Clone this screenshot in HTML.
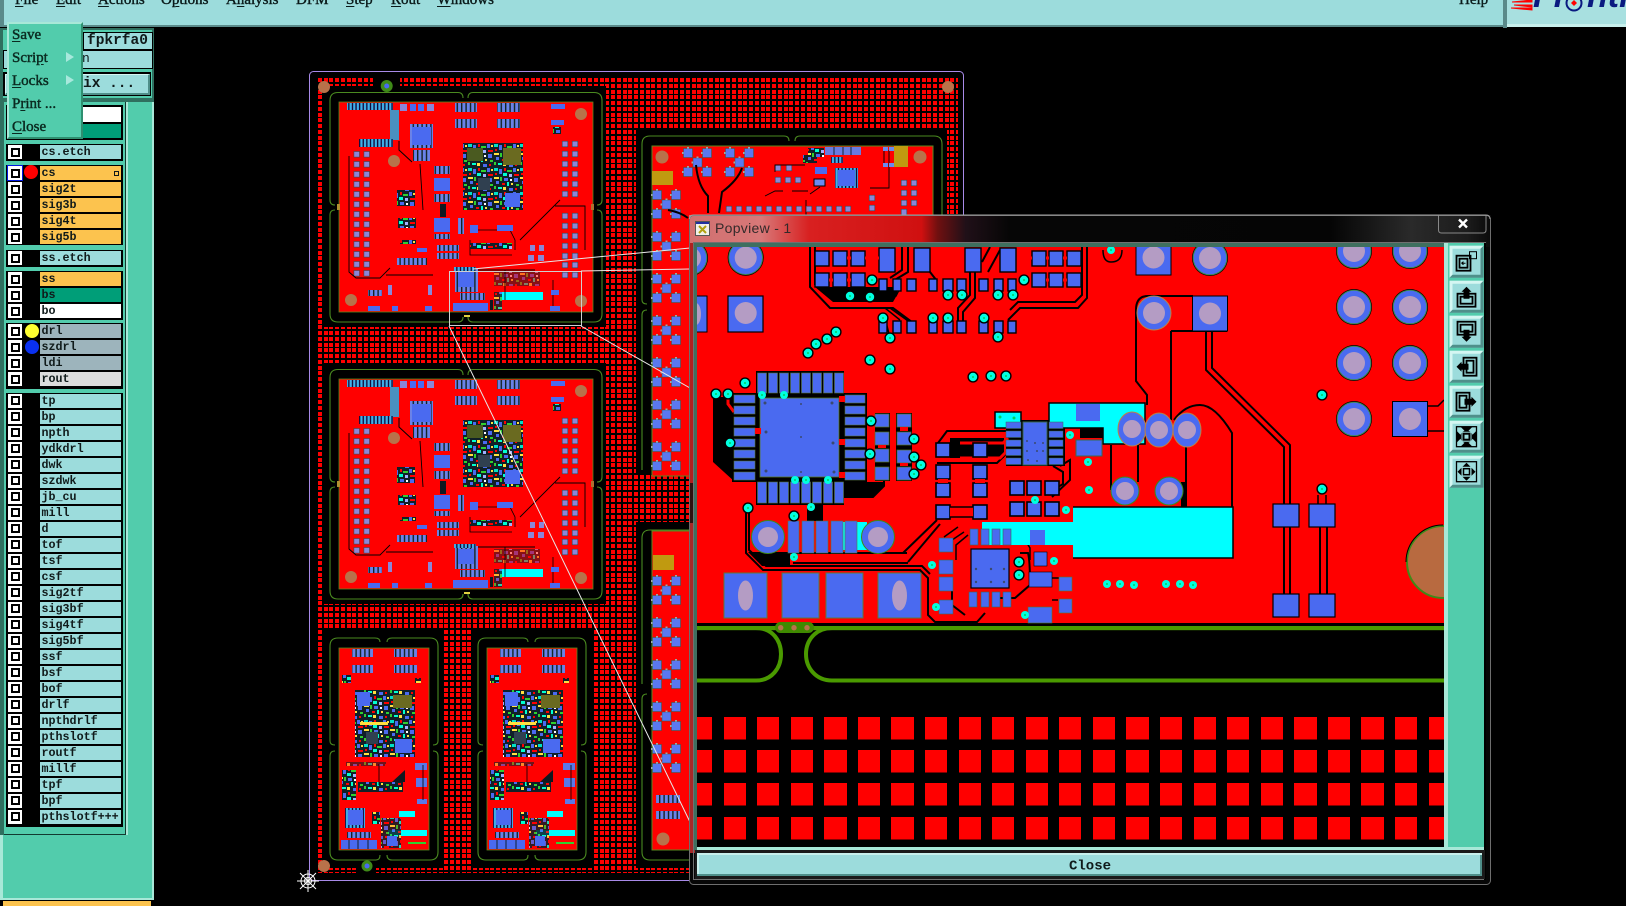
<!DOCTYPE html>
<html><head><meta charset="utf-8"><title>Popview</title>
<style>
html,body{margin:0;padding:0;background:#000;width:1626px;height:906px;overflow:hidden}
#w{position:relative;width:1626px;height:906px;overflow:hidden;background:#000;font-family:"Liberation Mono",monospace}
.a{position:absolute}
.m{position:absolute;top:-7.5px;font:15px/15px "Liberation Serif",serif;color:#0a1a1a;-webkit-text-stroke:.4px #0a1a1a;text-underline-offset:2px}
.g{position:absolute;left:6px;width:117px;background:#000}
.r{position:relative;height:16px}
.r i{position:absolute;left:2px;top:1px;width:14px;height:14px;background:#fff}
.r i::after{content:"";position:absolute;left:2.5px;top:2.5px;width:9px;height:9px;box-sizing:border-box;border:2.2px solid #000;background:#fff}
.r b{position:absolute;left:34px;top:1px;width:81px;height:14.3px;background:#9cdcdc;font:bold 11.7px/14px "Liberation Mono",monospace;color:#101a1a;padding-left:1.5px;box-sizing:border-box;white-space:nowrap}
.o b{background:#fcc34e}.gr b{background:#9db4bc}
.c{position:absolute;left:19px;top:1px;width:14px;height:14px;border-radius:50%}
.h{position:absolute;background:#9cdcdc;border:1px solid #000;font:bold 14.5px/17px "Liberation Mono",monospace;color:#101a1a;white-space:pre}
.dm{position:absolute;left:12px;font:15px/18px "Liberation Serif",serif;color:#0a2a20;-webkit-text-stroke:.45px #0a2a20;text-underline-offset:2px;white-space:pre}
.tri{position:absolute;left:66px;width:0;height:0;border-left:8px solid #a8e8dc;border-top:5px solid transparent;border-bottom:5px solid transparent}
svg{position:absolute;left:0;top:0}
</style></head><body><div id="w">

<svg width="1626" height="906" viewBox="0 0 1626 906" xmlns="http://www.w3.org/2000/svg">
<defs>
<pattern id="dots" patternUnits="userSpaceOnUse" x="335" y="78" width="23" height="23">
<g fill="#f00" shape-rendering="crispEdges">
<rect x="0" y="0" width="4" height="4"/><rect x="6" y="0" width="4" height="4"/><rect x="12" y="0" width="4" height="4"/><rect x="17" y="0" width="4" height="4"/>
<rect x="0" y="6" width="4" height="4"/><rect x="6" y="6" width="4" height="4"/><rect x="12" y="6" width="4" height="4"/><rect x="17" y="6" width="4" height="4"/>
<rect x="0" y="12" width="4" height="4"/><rect x="6" y="12" width="4" height="4"/><rect x="12" y="12" width="4" height="4"/><rect x="17" y="12" width="4" height="4"/>
<rect x="0" y="17" width="4" height="4"/><rect x="6" y="17" width="4" height="4"/><rect x="12" y="17" width="4" height="4"/><rect x="17" y="17" width="4" height="4"/>
</g></pattern>
<g id="bigrow" fill="#f00" shape-rendering="crispEdges">
<rect x="697" width="15" height="22.500"/><rect x="724" width="22" height="22.500"/><rect x="757" width="22" height="22.500"/><rect x="791" width="22" height="22.500"/><rect x="824" width="23" height="22.500"/><rect x="858" width="22" height="22.500"/><rect x="891" width="23" height="22.500"/><rect x="925" width="22" height="22.500"/><rect x="959" width="22" height="22.500"/><rect x="992" width="22" height="22.500"/><rect x="1026" width="22" height="22.500"/><rect x="1059" width="22" height="22.500"/><rect x="1093" width="22" height="22.500"/><rect x="1126" width="23" height="22.500"/><rect x="1160" width="22" height="22.500"/><rect x="1194" width="22" height="22.500"/><rect x="1227" width="22" height="22.500"/><rect x="1261" width="22" height="22.500"/><rect x="1294" width="23" height="22.500"/><rect x="1328" width="22" height="22.500"/><rect x="1361" width="23" height="22.500"/><rect x="1395" width="22" height="22.500"/><rect x="1429" width="15" height="22.500"/>
</g>
<pattern id="st" patternUnits="userSpaceOnUse" width="4.4" height="4"><rect width="4.4" height="4" fill="#122"/><rect x=".4" width="3" height="4" fill="#6a82e8"/></pattern>
<pattern id="st2" patternUnits="userSpaceOnUse" width="3.6" height="4"><rect width="3.6" height="4" fill="#103"/><rect x=".3" width="2.3" height="4" fill="#40b0e8"/></pattern>
<pattern id="n" patternUnits="userSpaceOnUse" width="26" height="24">
<rect width="26" height="24" fill="#102028"/>
<rect x="0" y="0" width="4" height="3" fill="#00e0c8"/><rect x="5" y="1" width="3" height="5" fill="#4a6af0"/><rect x="10" y="0" width="2" height="3" fill="#f00"/><rect x="13" y="2" width="5" height="2" fill="#30d030"/><rect x="19" y="0" width="3" height="4" fill="#4a6af0"/><rect x="23" y="1" width="2" height="2" fill="#ffe040"/>
<rect x="1" y="5" width="2" height="2" fill="#f00"/><rect x="9" y="5" width="4" height="3" fill="#00ffd0"/><rect x="15" y="6" width="3" height="3" fill="#a0b0ff"/><rect x="20" y="6" width="5" height="2" fill="#f00"/>
<rect x="0" y="9" width="5" height="2" fill="#ffe040"/><rect x="6" y="9" width="2" height="4" fill="#30d030"/><rect x="10" y="10" width="4" height="3" fill="#4a6af0"/><rect x="16" y="11" width="2" height="2" fill="#fff"/><rect x="20" y="10" width="4" height="4" fill="#4a6af0"/>
<rect x="2" y="13" width="3" height="3" fill="#4a6af0"/><rect x="8" y="15" width="3" height="2" fill="#f00"/><rect x="13" y="14" width="2" height="4" fill="#00ffd0"/><rect x="17" y="15" width="2" height="2" fill="#ffe040"/><rect x="22" y="16" width="3" height="2" fill="#30d030"/>
<rect x="0" y="18" width="2" height="3" fill="#30d030"/><rect x="4" y="19" width="4" height="2" fill="#00ffd0"/><rect x="9" y="19" width="3" height="3" fill="#ffe040"/><rect x="15" y="20" width="4" height="3" fill="#4a6af0"/><rect x="21" y="20" width="2" height="2" fill="#f00"/>
</pattern>
<g id="sp"><rect x="-2.8" y="-2.8" width="5.6" height="5.6" fill="#8a86d8" stroke="#444" stroke-width=".6"/></g>
<g id="v"><circle r="5.6" fill="#000"/><circle r="4.200" fill="#00ffe0"/><circle r="1" fill="#00d060"/></g>
<g id="tv"><circle r="4" fill="#00ffe0"/><circle r="1" fill="#00d060"/></g>
<g id="th"><circle r="18" fill="#000"/><circle r="16.8" fill="#4a6af0" stroke="#3f8a50" stroke-width="1"/><circle r="11" fill="#b49cc4"/></g>
<g id="ts"><rect x="-17.5" y="-17.5" width="35" height="35" fill="#4a6af0" stroke="#000" stroke-width="1"/><circle r="11" fill="#b49cc4"/></g>
<g id="p14"><rect x="-7" y="-7" width="14" height="14" fill="#4a6af0" stroke="#000" stroke-width="1.6"/></g>
<g id="bl"><rect x="-4.5" y="-4.5" width="9" height="9" fill="#5a78f0" stroke="#2a6040" stroke-width=".5"/><rect x="-1" y="-6" width="2" height="1.6" fill="#9aa"/><rect x="-6" y="-1" width="1.6" height="2" fill="#9aa"/></g>
<g id="grp"><use href="#bl" x="0" y="0"/><use href="#bl" x="19" y="0"/><use href="#bl" x="9.5" y="9.5"/><use href="#bl" x="0" y="19"/><use href="#bl" x="19" y="19"/></g>

<g id="boardA">
<rect x="339" y="102" width="254" height="210" fill="#f00" stroke="#5a8a20" stroke-width=".8"/>
<path d="M463 98q0-5.500-5-5.500H338q-8 0-8 8V200q0 5 5 5M335 210q-5 0-5 5V314q0 8 8 8H458q5 0 5-5M468 98q0-5.500 5-5.500H594q8 0 8 8V200q0 5-5 5M597 210q5 0 5 5V314q0 8-8 8H473q-5 0-5-5" fill="none" stroke="#4a8a20" stroke-width="1.1"/>
<rect x="464" y="315" width="6" height="2" fill="#e0d040"/><rect x="337" y="204" width="3" height="6" fill="#b09030"/><rect x="591" y="204" width="3" height="6" fill="#b07030"/>
<circle cx="581" cy="114" r="6" fill="#b8724a"/><circle cx="394" cy="161" r="6" fill="#b8724a"/><circle cx="351" cy="300" r="6" fill="#b8724a"/><circle cx="581" cy="301" r="6" fill="#b8724a"/>
<rect x="347" y="103" width="46" height="7" fill="url(#st2)"/><rect x="390" y="110" width="9" height="30" fill="#4a90c0"/><rect x="359" y="139" width="34" height="8" fill="url(#st2)"/>
<rect x="400" y="104" width="7" height="7" fill="#8a86d8"/><rect x="410" y="104" width="6" height="7" fill="#4a6af0"/><rect x="418" y="104" width="6" height="7" fill="#4a6af0"/><rect x="427" y="104" width="7" height="7" fill="#8a86d8"/>
<rect x="410" y="124" width="23" height="24" fill="url(#st)"/><rect x="412" y="127" width="19" height="18" fill="#4a6af0"/><rect x="413" y="150" width="17" height="11" fill="url(#st)"/><path d="M399 141V150L412 162" fill="none" stroke="#000" stroke-width="1"/>
<rect x="455" y="103" width="22" height="9" fill="url(#st)"/><rect x="455" y="119" width="22" height="9" fill="url(#st)"/><rect x="497" y="103" width="23" height="9" fill="url(#st)"/><rect x="497" y="119" width="23" height="9" fill="url(#st)"/>
<rect x="551" y="104" width="14" height="5" fill="#4a6af0"/><rect x="551" y="120" width="13" height="5" fill="#4a6af0"/><rect x="553" y="127" width="8" height="7" fill="url(#n)"/>
<rect x="463" y="143" width="60" height="67" fill="url(#n)"/><rect x="503" y="148" width="18" height="17" fill="#6a6a20"/><rect x="467" y="148" width="16" height="13" fill="#4a5a20"/><rect x="505" y="193" width="15" height="14" fill="#4a6af0"/><rect x="478" y="178" width="12" height="12" fill="#304050"/>
<rect x="434" y="178" width="16" height="13" fill="#4a6af0"/><rect x="434" y="218" width="16" height="14" fill="#4a6af0"/><rect x="434" y="166" width="16" height="8" fill="url(#st)"/><rect x="434" y="194" width="16" height="8" fill="url(#st)"/><rect x="434" y="234" width="16" height="5" fill="url(#st)"/><rect x="440" y="204" width="6" height="13" fill="#101820"/><rect x="458" y="218" width="6" height="16" fill="url(#st)"/>
<rect x="397" y="190" width="18" height="16" fill="url(#n)"/><rect x="398" y="218" width="18" height="10" fill="url(#n)"/><rect x="400" y="240" width="16" height="4" fill="url(#n)"/><rect x="397" y="258" width="30" height="7" fill="url(#st)"/><rect x="417" y="248" width="10" height="4" fill="#4a6af0"/>
<use href="#sp" x="356.700" y="154.300"/><use href="#sp" x="366.700" y="154.300"/><use href="#sp" x="356.700" y="164.300"/><use href="#sp" x="366.700" y="164.300"/><use href="#sp" x="356.700" y="174.300"/><use href="#sp" x="366.700" y="174.300"/><use href="#sp" x="356.700" y="184.300"/><use href="#sp" x="366.700" y="184.300"/><use href="#sp" x="356.700" y="194.300"/><use href="#sp" x="366.700" y="194.300"/><use href="#sp" x="356.700" y="204.300"/><use href="#sp" x="366.700" y="204.300"/><use href="#sp" x="356.700" y="214.300"/><use href="#sp" x="366.700" y="214.300"/><use href="#sp" x="356.700" y="224.300"/><use href="#sp" x="366.700" y="224.300"/><use href="#sp" x="356.700" y="234.300"/><use href="#sp" x="366.700" y="234.300"/><use href="#sp" x="356.700" y="244.300"/><use href="#sp" x="366.700" y="244.300"/><use href="#sp" x="356.700" y="254.300"/><use href="#sp" x="366.700" y="254.300"/><use href="#sp" x="356.700" y="264.300"/><use href="#sp" x="366.700" y="264.300"/><use href="#sp" x="356.700" y="273.300"/><use href="#sp" x="366.700" y="273.300"/>
<use href="#sp" x="565" y="144"/><use href="#sp" x="575" y="144"/><use href="#sp" x="565" y="154"/><use href="#sp" x="575" y="154"/><use href="#sp" x="565" y="164"/><use href="#sp" x="575" y="164"/><use href="#sp" x="565" y="174"/><use href="#sp" x="575" y="174"/><use href="#sp" x="565" y="184"/><use href="#sp" x="575" y="184"/><use href="#sp" x="565" y="194"/><use href="#sp" x="575" y="194"/>
<use href="#sp" x="565" y="216"/><use href="#sp" x="575" y="216"/><use href="#sp" x="565" y="226"/><use href="#sp" x="575" y="226"/><use href="#sp" x="565" y="236"/><use href="#sp" x="575" y="236"/><use href="#sp" x="565" y="246"/><use href="#sp" x="575" y="246"/><use href="#sp" x="565" y="256"/><use href="#sp" x="575" y="256"/><use href="#sp" x="565" y="265"/><use href="#sp" x="575" y="265"/><use href="#sp" x="565" y="275"/><use href="#sp" x="575" y="275"/>
<path d="M349 156V272L356 278H380L390 268M420 164L423 210M560 200L520 240M555 206H585V250M386 275H433M470 270H535" fill="none" stroke="#000" stroke-width=".9"/>
<path d="M470 230H510L515 240V250M470 240V255H512" fill="none" stroke="#000" stroke-width=".8"/><rect x="470" y="243" width="42" height="6" fill="url(#n)"/><rect x="470" y="225" width="8" height="8" fill="#4a6af0"/><rect x="497" y="225" width="8" height="6" fill="#4a6af0"/><rect x="505" y="225" width="8" height="6" fill="#4a6af0"/>
<rect x="437" y="245" width="22" height="6" fill="url(#st)"/><rect x="437" y="253" width="22" height="6" fill="url(#st)"/>
<rect x="530" y="245" width="5" height="6" fill="#8a86d8"/><rect x="539" y="245" width="5" height="6" fill="#8a86d8"/><rect x="528" y="255" width="6" height="6" fill="#8a86d8"/><rect x="538" y="255" width="6" height="6" fill="#8a86d8"/>
<rect x="455" y="269" width="23" height="23" fill="url(#st)"/><rect x="458" y="272" width="16" height="15" fill="#4a6af0"/><rect x="454" y="267" width="22" height="4" fill="url(#st2)"/>
<rect x="494" y="272" width="46" height="14" fill="url(#n)" opacity=".5"/><rect x="500" y="292" width="43" height="8" fill="#00ffff"/><rect x="494" y="292" width="8" height="18" fill="url(#n)" opacity=".8"/><rect x="460" y="293" width="25" height="7" fill="url(#st)"/>
<rect x="453" y="303" width="35" height="8" fill="#4a6af0"/><rect x="490" y="300" width="3" height="10" fill="#101820"/><path d="M505 270V300M553 280V310" stroke="#000" stroke-width=".8"/><rect x="551" y="290" width="8" height="5" fill="#4a6af0"/><rect x="550" y="306" width="10" height="5" fill="#4a6af0"/>
<rect x="368" y="290" width="14" height="6" fill="url(#st)"/><rect x="388" y="285" width="4" height="10" fill="#8a86d8"/><rect x="428" y="285" width="4" height="10" fill="#8a86d8"/>
<rect x="368" y="306" width="12" height="5" fill="#4a6af0"/><rect x="392" y="306" width="6" height="5" fill="#4a6af0"/><rect x="425" y="306" width="7" height="5" fill="#4a6af0"/>
</g>

<g id="boardS">
<rect x="339" y="648" width="90" height="202" fill="#f00" stroke="#5a8a20" stroke-width=".8"/>
<path d="M380 642q0-4-5-4H338q-8 0-8 8V741q0 4 5 4M335 751q-5 0-5 5V852q0 8 8 8H376q4 0 4-5M387 642q0-4 5-4H430q8 0 8 8V741q0 4-5 4M433 751q5 0 5 5V852q0 8-8 8H392q-5 0-5-5" fill="none" stroke="#4a8a20" stroke-width="1.100"/>
<rect x="352" y="649" width="21" height="8" fill="url(#st)"/><rect x="394" y="649" width="23" height="8" fill="url(#st)"/><rect x="352" y="665" width="21" height="8" fill="url(#st)"/><rect x="394" y="665" width="23" height="8" fill="url(#st)"/>
<rect x="342" y="675" width="9" height="8" fill="url(#n)"/><rect x="415" y="678" width="6" height="5" fill="url(#n)"/>
<rect x="355" y="690" width="60" height="67" fill="url(#n)"/><rect x="393" y="695" width="19" height="13" fill="#6a6a20"/><rect x="395" y="739" width="17" height="14" fill="#4a6af0"/><rect x="357" y="692" width="13" height="14" fill="#4a6af0"/><rect x="366" y="732" width="12" height="12" fill="#304050"/><rect x="360" y="722" width="28" height="3" fill="#ffe040"/>
<rect x="342" y="770" width="14" height="30" fill="url(#n)"/><rect x="358" y="782" width="45" height="10" fill="url(#n)"/><path d="M392 782L405 770V782Z" fill="#101820"/><rect x="346" y="762" width="40" height="4" fill="url(#n)" opacity=".6"/><rect x="415" y="763" width="12" height="7" fill="#5a78e8"/><rect x="416" y="778" width="11" height="9" fill="#5a78e8"/><rect x="417" y="799" width="10" height="5" fill="#5a78e8"/><path d="M379 764V785M423 765V800" stroke="#000" stroke-width=".8"/>
<rect x="345" y="808" width="20" height="20" fill="url(#st2)"/><rect x="348" y="810" width="15" height="15" fill="#4a6af0"/><rect x="372" y="812" width="8" height="12" fill="url(#n)"/>
<rect x="341" y="840" width="36" height="9" fill="#4a6af0"/><path d="M349 840v9M358 840v9M368 840v9" stroke="#123"/><rect x="347" y="832" width="24" height="6" fill="url(#st)"/>
<rect x="388" y="830" width="39" height="6" fill="#00ffff"/><rect x="399" y="811" width="16" height="6" fill="#00ffff"/><rect x="381" y="818" width="20" height="30" fill="url(#n)" opacity=".85"/><rect x="387" y="836" width="10" height="10" fill="#4a6af0"/><rect x="408" y="842" width="18" height="2" fill="#30d030"/>
</g>
<linearGradient id="gl" x1="0" x2="1" y1="0" y2="0"><stop offset="0" stop-color="#d07070"/><stop offset=".09" stop-color="#d87878"/><stop offset=".15" stop-color="#d82020"/><stop offset=".29" stop-color="#d01010"/><stop offset=".31" stop-color="#701010"/><stop offset=".345" stop-color="#201018"/><stop offset=".4" stop-color="#060606"/><stop offset=".8" stop-color="#050505"/><stop offset=".9" stop-color="#2a2a2a"/><stop offset=".97" stop-color="#1c1c1c"/><stop offset="1" stop-color="#0a0a0a"/></linearGradient>
<clipPath id="cv"><rect x="697" y="247" width="747" height="600"/></clipPath>
</defs>

<!-- overview -->
<rect x="316" y="78" width="642" height="795" fill="url(#dots)"/>
<rect x="300" y="84" width="21" height="3" fill="#000"/>
<rect x="373" y="74" width="27" height="12" fill="#000"/>
<rect x="322" y="86" width="284" height="241" fill="#000"/>
<rect x="322" y="363" width="284" height="241" fill="#000"/>
<rect x="322" y="630" width="122" height="238" fill="#000"/>
<rect x="471" y="630" width="123" height="238" fill="#000"/>
<rect x="636" y="130" width="311" height="344" fill="#000"/>
<rect x="636" y="522" width="330" height="346" fill="#000"/>
<rect x="357" y="866" width="19" height="10" fill="#000"/>
<use href="#boardA"/><use href="#boardA" y="277"/>
<use href="#boardS"/><use href="#boardS" x="148"/>
<circle cx="324" cy="87" r="6" fill="#b8724a"/><circle cx="386.700" cy="86" r="6" fill="#3f8a18"/><circle cx="386.700" cy="86" r="2.500" fill="#4a6af0"/>
<circle cx="948" cy="87" r="6" fill="#b8724a"/><circle cx="324" cy="866" r="6" fill="#b8724a"/><circle cx="367" cy="866" r="5.500" fill="#3f8a18"/><circle cx="367" cy="866" r="2.500" fill="#4a6af0"/>

<!-- board B top -->
<rect x="652" y="146" width="281" height="330" fill="#f00" stroke="#5a8a20"/>
<path d="M789 141q0-5-5-5H650q-8 0-8 8V300q0 4 5 4M647 310q-5 0-5 5V470" fill="none" stroke="#4a8a20" stroke-width="1.100"/><path d="M795 141q0-5 5-5H934q8 0 8 8V215" fill="none" stroke="#4a8a20" stroke-width="1.100"/>
<circle cx="662" cy="157" r="6.500" fill="#b8724a"/><circle cx="920" cy="157" r="6.500" fill="#b8724a"/>
<rect x="652" y="171" width="21" height="14" fill="#c09a10"/><rect x="894" y="146" width="14" height="21" fill="#c09a10"/>
<use href="#grp" x="688" y="153"/><use href="#grp" x="730" y="153"/><use href="#grp" x="657" y="195"/><use href="#grp" x="657" y="237"/><use href="#grp" x="657" y="279"/><use href="#grp" x="657" y="321"/><use href="#grp" x="657" y="363"/><use href="#grp" x="657" y="405"/><use href="#grp" x="657" y="447"/>
<path d="M696 165Q698 186 708 196V213M742 168Q738 180 722 192L719 213M668 210Q680 212 688 218" fill="none" stroke="#000" stroke-width="2"/>
<rect x="835" y="168" width="23" height="20" fill="url(#st2)"/><rect x="838" y="170" width="17" height="16" fill="#4a6af0"/>
<rect x="825" y="147" width="36" height="8" fill="#6a7ae0"/><path d="M834 147v8M843 147v8M851 147v8" stroke="#123"/>
<rect x="803" y="155" width="14" height="8" fill="url(#n)"/><rect x="808" y="148" width="16" height="9" fill="url(#n)"/><rect x="831" y="157" width="12" height="6" fill="url(#st2)"/><rect x="815" y="167" width="12" height="7" fill="#4a6af0"/>
<rect x="814" y="179" width="11" height="7" fill="#6a8af0" stroke="#000"/>
<use href="#sp" x="778" y="168"/><use href="#sp" x="789" y="168"/><use href="#sp" x="778" y="180"/><use href="#sp" x="788" y="180"/><use href="#sp" x="798" y="180"/>
<path d="M775 172V165H805M765 196L775 191H783M792 191H808M810 194L820 187M806 200V218M870 188H889V150M884 150V165" fill="none" stroke="#000" stroke-width=".9"/>
<rect x="883" y="147" width="5" height="4" fill="#6a8af0"/><rect x="889" y="147" width="5" height="4" fill="#6a8af0"/><rect x="883" y="163" width="5" height="4" fill="#6a8af0"/><rect x="889" y="163" width="5" height="4" fill="#6a8af0"/>
<use href="#sp" x="904" y="183"/><use href="#sp" x="914" y="183"/><use href="#sp" x="904" y="193"/><use href="#sp" x="914" y="193"/><use href="#sp" x="904" y="203"/><use href="#sp" x="914" y="203"/><use href="#sp" x="904" y="212"/><use href="#sp" x="872" y="198"/><use href="#sp" x="872" y="208"/>
<use href="#sp" x="729" y="209"/><use href="#sp" x="739" y="209"/><use href="#sp" x="749" y="209"/><use href="#sp" x="759" y="209"/><use href="#sp" x="769" y="209"/><use href="#sp" x="779" y="209"/><use href="#sp" x="789" y="209"/><use href="#sp" x="799" y="209"/><use href="#sp" x="809" y="209"/><use href="#sp" x="819" y="209"/><use href="#sp" x="829" y="209"/><use href="#sp" x="839" y="209"/><use href="#sp" x="848" y="209"/>
<!-- board D -->
<rect x="652" y="531" width="310" height="319" fill="#f00" stroke="#5a8a20"/>
<path d="M642 684V538q0-8 8-8H690M647 694q-5 0-5 5V852q0 8 8 8H690" fill="none" stroke="#4a8a20" stroke-width="1.100"/>
<rect x="653" y="555" width="21" height="15" fill="#c09a10"/>
<circle cx="663" cy="839" r="6.500" fill="#b8724a"/>
<use href="#grp" x="657" y="581"/><use href="#grp" x="657" y="623"/><use href="#grp" x="657" y="665"/><use href="#grp" x="657" y="707"/><use href="#grp" x="657" y="749"/>
<rect x="656" y="795" width="24" height="8" fill="url(#st)"/><rect x="656" y="811" width="24" height="8" fill="url(#st)"/>
<rect x="309.500" y="71.500" width="654" height="809" rx="4" fill="none" stroke="#a88ae8" stroke-width="1"/>
<!-- overview link lines -->
<g stroke="#e8e8e8" fill="none" stroke-width="1">
<rect x="449.500" y="271.500" width="132" height="54" stroke="#d0d0d0"/>
<path d="M473 269L690 248M581 271L690 269M581 326L690 388M449 326L690 822"/>
</g>
<!-- origin marker -->
<g stroke="#fff" stroke-width="1" fill="none" transform="translate(308 881)"><circle r="7"/><circle r="3.500"/><path d="M-11 0H11M0-11V11M-8-8L8 8M-8 8L8-8"/></g>

<!-- popview frame -->
<rect x="689" y="215" width="802" height="670" rx="4" fill="#060606"/>
<rect x="689" y="215" width="802" height="32" fill="url(#gl)"/>
<rect x="689" y="243" width="8" height="240" fill="#b02020"/><rect x="689" y="483" width="8" height="40" fill="#301010"/><rect x="689" y="523" width="8" height="330" fill="#a82828"/>
<rect x="689.500" y="215.500" width="801" height="669" rx="4" fill="none" stroke="#6e6e6e" stroke-width="1"/>
<path d="M689.500 219q0-4 4-4H1486q4 0 4 4" fill="none" stroke="#a0a0a0"/>
<rect x="693.500" y="242.500" width="792" height="637" fill="none" stroke="#707070" stroke-width="1"/>
<rect x="694" y="243" width="750" height="4" fill="#3f6f5f"/><rect x="694" y="243" width="3" height="607" fill="#3f6f5f"/>
<rect x="1445" y="243" width="39" height="607" fill="#52ccac"/><rect x="1444" y="243" width="4" height="607" fill="#a8e8d8"/>
<rect x="697" y="847" width="787" height="3" fill="#a8e8d8"/>
<rect x="1484" y="243" width="2" height="637" fill="#000"/>
<!-- title -->
<rect x="695.500" y="221.500" width="14" height="14" fill="#f0f0e8" stroke="#555"/><rect x="696" y="222" width="13" height="2" fill="#2030a0"/><path d="M699 226L706 233M706 226L699 233" stroke="#b0a010" stroke-width="2"/>
<text x="715" y="233" font-family="Liberation Sans" font-size="14" letter-spacing=".3" fill="#332a2a">Popview - 1</text>
<path d="M1438.500 215.500V230q0 3 3 3H1483q3 0 3-3V215.500" fill="none" stroke="#888"/>
<path d="M1459 219.500L1467 227.500M1467 219.500L1459 227.500" stroke="#fff" stroke-width="2.400"/>

<!-- PCB zoom -->
<g clip-path="url(#cv)">
<rect x="697" y="247" width="747" height="376" fill="#f00"/>
<rect x="697" y="623" width="747" height="224" fill="#000"/>
<use href="#bigrow" y="717"/><use href="#bigrow" y="750"/><use href="#bigrow" y="783"/><use href="#bigrow" y="817"/>
<!-- green outlines -->
<rect x="697" y="626" width="747" height="4.200" fill="#4a9a00"/>
<path d="M697 680.500H756C772 680.500 781 668 781 654S772 628 756 628M1444 680.500H832C816 680.500 806 668 806 654S816 628 832 628" fill="none" stroke="#4a9a00" stroke-width="4"/>
<rect x="775" y="622" width="39" height="11" rx="5.500" fill="#3f8a00"/><circle cx="780.700" cy="627.700" r="2.700" fill="#b8724a"/><circle cx="794" cy="627.700" r="2.700" fill="#b8724a"/><circle cx="807" cy="627.700" r="2.700" fill="#b8724a"/>
<circle cx="1443" cy="562" r="36" fill="#b86a40" stroke="#3f8a18" stroke-width="2"/>
<path d="M1406 562a37 37 0 0 1 37-37" fill="none" stroke="#000" stroke-width="1"/>

<!-- black fills -->
<path d="M815 287H897V295L893 302H833Z" fill="#000"/>
<path d="M713 397H733V482L735 482L713 462Z" fill="#000"/>
<rect x="756" y="371" width="88" height="134" fill="#000"/><rect x="732" y="393" width="135" height="89" fill="#000"/>
<path d="M843 482H883V487L873 497H843Z" fill="#000"/>
<rect x="875" y="413" width="15" height="68" fill="#000"/><rect x="896" y="413" width="16" height="68" fill="#000"/>
<rect x="950" y="438" width="54" height="20" fill="#000"/>
<rect x="1006" y="420" width="59" height="46" fill="#000"/>
<rect x="807" y="503" width="16" height="18" fill="#000"/>
<path d="M748 552L762 566H790V552H778Z" fill="#000"/>

<!-- traces -->
<g fill="none" stroke="#000" stroke-width="2">
<path d="M810 247V287L830 308H893L912 322"/>
<path d="M815 247V285"/>
<path d="M908 247V272L893 281M902 247V270L890 278"/>
<path d="M1087 247V298L1078 308H1020L1008 320M1082 247V295L1075 302H1018L1010 310"/>
<path d="M975 272V298L963 312V322M970 272V295L958 308V322"/>
<path d="M930 272L937 281M990 247L982 262M1000 250L988 272"/>
<path d="M862 296H896L900 288" stroke-width="1.500"/>
<path d="M886 322L890 338" stroke-width="1.500"/>
<path d="M911 323L890 308M900 320L885 308" stroke-width="1.500"/>
<path d="M716 397V462L735 480H745"/>
<path d="M728 398V404L734 412" stroke="#f00" stroke-width="3"/>
<path d="M745 385V392" stroke="#f00" stroke-width="3"/>
<path d="M843 497H873L884 486V475" />
<path d="M938 443L947 431H1006M937 463H997L1007 453" />
<path d="M960 443H1003L1008 438M960 458H1000L1008 450" stroke="#f00" stroke-width="3"/>
<path d="M1060 466L1070 460V480L1052 497M1053 466L1063 472V484L1045 495" stroke-width="2"/>
<path d="M746 513V553L763 570H920L928 578V615L935 622H977L985 613"/>
<path d="M749 513V550L766 566H922L930 574"/>
<path d="M903 553L937 520M908 562L940 524"/>
<path d="M788 553H907M793 563H908"/>
<path d="M964 532L952 540V552M968 535L956 545V560M958 527L944 537"  stroke-width="1.500"/>
<path d="M952 585V605L965 615M1020 553H1028Q1030 560 1030 585L1015 598H1000" stroke-width="2"/>
<path d="M1008 538Q1018 535 1025 540L1030 548V560" stroke-width="1.500"/>
<path d="M1052 578H1066M1052 600H1058" stroke-width="1.500"/>
<path d="M1193 296H1148Q1136 296 1136 310V381L1147 395V405" />
<path d="M1171 331V420M1227 331H1171" />
<path d="M1174 420Q1185 405 1200 405Q1215 405 1232 433V507" stroke-width="2"/>
<path d="M1206 331V370L1284 447V505M1212 331V368L1290 445V505" stroke-width="2"/>
<path d="M1111 445V490M1138 445V482M1186 447V490" stroke-width="2"/>
<path d="M1103 250Q1103 262 1111 262Q1122 262 1122 250" stroke-width="1.500"/>
<path d="M1428 406H1438L1444 400M1428 431H1444" stroke-width="1.500"/>
<path d="M1284 527V594M1290 527V594M1320 527V594M1327 527V594" stroke-width="2"/>
<path d="M1318 495V505M1326 495V505" stroke-width="1.500"/>
</g>
<rect x="1181" y="482" width="6" height="25" fill="#000"/>

<!-- top pads -->
<use href="#th" x="690" y="258"/><use href="#th" x="745.700" y="257.700"/>
<rect x="690" y="296" width="17" height="36" fill="#4a6af0" stroke="#000"/><ellipse cx="696" cy="314" rx="5" ry="11" fill="#b49cc4"/>
<rect x="728" y="296" width="35" height="36" fill="#4a6af0" stroke="#000" stroke-width="1.200"/><circle cx="745.700" cy="313" r="11" fill="#b49cc4"/>
<g fill="#4a6af0" stroke="#000" stroke-width="1.400">
<rect x="815" y="251" width="14" height="15"/><rect x="833" y="251" width="14" height="15"/><rect x="851" y="251" width="14" height="15"/>
<rect x="1032" y="251" width="14" height="15"/><rect x="1049" y="251" width="14" height="15"/><rect x="1067" y="251" width="14" height="15"/>
<rect x="815" y="273" width="14" height="14"/><rect x="833" y="273" width="14" height="14"/><rect x="851" y="273" width="14" height="14"/>
<rect x="1032" y="273" width="14" height="14"/><rect x="1049" y="273" width="14" height="14"/><rect x="1067" y="273" width="14" height="14"/>
<rect x="879" y="248" width="16" height="24"/><rect x="914" y="248" width="16" height="24"/><rect x="965" y="248" width="16" height="24"/><rect x="1000" y="248" width="16" height="24"/>
<rect x="879" y="279" width="8" height="12"/><rect x="893" y="279" width="8" height="12"/><rect x="907" y="279" width="9" height="12"/><rect x="929" y="279" width="8" height="12"/><rect x="943" y="279" width="10" height="12"/><rect x="957" y="279" width="9" height="12"/><rect x="979" y="279" width="9" height="12"/><rect x="994" y="279" width="9" height="12"/><rect x="1008" y="279" width="8" height="12"/>
<rect x="879" y="321" width="8" height="12"/><rect x="893" y="321" width="8" height="12"/><rect x="907" y="321" width="9" height="12"/><rect x="929" y="321" width="8" height="12"/><rect x="943" y="321" width="10" height="12"/><rect x="957" y="321" width="9" height="12"/><rect x="979" y="321" width="9" height="12"/><rect x="994" y="321" width="9" height="12"/><rect x="1008" y="321" width="8" height="12"/>
</g>
<path d="M847 258h4M829 280h4M847 280h4M865 258h14M1017 258h15M1046 280h3M1063 280h4M1063 258h4M1046 258h3" stroke="#f00" stroke-width="3"/>

<!-- QFN -->
<rect x="760" y="398" width="79" height="79" fill="#4a6af0" stroke="#5a7a20" stroke-width=".8"/>
<g fill="#3a4a70"><circle cx="765" cy="403" r="1.500"/><circle cx="801" cy="404" r="1"/><circle cx="832" cy="403" r="1.500"/><circle cx="766" cy="432" r="1.500"/><circle cx="801" cy="437" r="1"/><circle cx="833" cy="443" r="1.500"/><circle cx="766" cy="471" r="1.500"/><circle cx="801" cy="472" r="1"/><circle cx="834" cy="472" r="1.500"/></g>
<g fill="#4a6af0" stroke="#5a7a40" stroke-width=".6">
<rect x="757.500" y="373" width="9" height="20"/><rect x="768.500" y="373" width="9" height="20"/><rect x="779.500" y="373" width="9" height="20"/><rect x="790.500" y="373" width="9" height="20"/><rect x="801.500" y="373" width="9" height="20"/><rect x="812.500" y="373" width="9" height="20"/><rect x="823.500" y="373" width="9" height="20"/><rect x="834.500" y="373" width="9" height="20"/>
<rect x="757.500" y="482" width="9" height="21"/><rect x="768.500" y="482" width="9" height="21"/><rect x="779.500" y="482" width="9" height="21"/><rect x="790.500" y="482" width="9" height="21"/><rect x="801.500" y="482" width="9" height="21"/><rect x="812.500" y="482" width="9" height="21"/><rect x="823.500" y="482" width="9" height="21"/><rect x="834.500" y="482" width="9" height="21"/>
<rect x="734" y="395" width="21" height="8"/><rect x="734" y="406" width="21" height="8"/><rect x="734" y="417" width="21" height="8"/><rect x="734" y="428" width="21" height="8"/><rect x="734" y="439" width="21" height="8"/><rect x="734" y="450" width="21" height="8"/><rect x="734" y="461" width="21" height="8"/><rect x="734" y="472" width="21" height="8"/>
<rect x="845" y="395" width="20" height="8"/><rect x="845" y="406" width="20" height="8"/><rect x="845" y="417" width="20" height="8"/><rect x="845" y="428" width="20" height="8"/><rect x="845" y="439" width="20" height="8"/><rect x="845" y="450" width="20" height="8"/><rect x="845" y="461" width="20" height="8"/><rect x="845" y="472" width="20" height="8"/>
</g>
<rect x="839" y="396" width="6" height="6" fill="#f00"/><rect x="839" y="439" width="6" height="6" fill="#f00"/><rect x="839" y="472" width="6" height="6" fill="#f00"/><rect x="755" y="428" width="6" height="6" fill="#f00"/>
<!-- two col pads -->
<g fill="#4a6af0" stroke="#5a7a20" stroke-width=".7">
<rect x="875" y="414" width="14" height="13"/><rect x="875" y="432" width="14" height="13"/><rect x="875" y="449" width="14" height="13"/><rect x="875" y="467" width="14" height="13"/>
<rect x="897" y="414" width="14" height="13"/><rect x="897" y="432" width="14" height="13"/><rect x="897" y="450" width="14" height="13"/><rect x="897" y="467" width="14" height="13"/>
</g>
<rect x="900" y="427" width="8" height="4" fill="#f00"/><rect x="878" y="445" width="8" height="3" fill="#f00"/><rect x="900" y="463" width="8" height="3" fill="#f00"/>
<use href="#p14" x="943" y="450"/><use href="#p14" x="980" y="450"/><use href="#p14" x="943" y="472"/><use href="#p14" x="980" y="472"/><use href="#p14" x="943" y="490"/><use href="#p14" x="980" y="490"/>
<rect x="938" y="479" width="10" height="4" fill="#f00"/><rect x="975" y="479" width="10" height="4" fill="#f00"/>
<!-- small QFN + cyan -->
<rect x="995" y="412" width="26" height="16" fill="#00ffff" stroke="#000" stroke-width="1.500"/><circle cx="1000" cy="417" r="1.500" fill="#00d060"/><circle cx="1014" cy="418" r="1.500" fill="#00d060"/>
<path d="M1049 403H1145V444H1103V428H1049Z" fill="#00ffff" stroke="#000" stroke-width="1.500"/><rect x="1076" y="404" width="24" height="17" fill="#4a6af0"/><rect x="1080" y="428" width="23" height="10" fill="#000"/>
<rect x="1076" y="440" width="26" height="16" fill="#4a6af0" stroke="#3a6a50"/>
<rect x="1023" y="422" width="24" height="43" fill="#4a6af0" stroke="#3a6a50"/>
<g fill="#3a4a70"><circle cx="1027" cy="441" r="1"/><circle cx="1035" cy="443" r="1"/><circle cx="1043" cy="443" r="1"/><circle cx="1027" cy="451" r="1"/><circle cx="1037" cy="451" r="1"/><circle cx="1043" cy="451" r="1"/><circle cx="1028" cy="460" r="1"/><circle cx="1037" cy="461" r="1"/></g>
<g fill="#4a6af0" stroke="#3a6a50" stroke-width=".5"><rect x="1006" y="422" width="15" height="6.500"/><rect x="1006" y="431" width="15" height="6.500"/><rect x="1006" y="440" width="15" height="6.500"/><rect x="1006" y="449" width="15" height="6.500"/><rect x="1006" y="458" width="15" height="6.500"/><rect x="1049" y="422" width="14" height="6.500"/><rect x="1049" y="431" width="14" height="6.500"/><rect x="1049" y="440" width="14" height="6.500"/><rect x="1049" y="449" width="14" height="6.500"/><rect x="1049" y="458" width="14" height="6.500"/></g>
<use href="#p14" x="1017" y="488"/><use href="#p14" x="1034" y="488"/><use href="#p14" x="1052" y="488"/><use href="#p14" x="1017" y="509"/><use href="#p14" x="1034" y="509"/><use href="#p14" x="1052" y="509"/>
<use href="#p14" x="943" y="512"/><use href="#p14" x="980" y="512"/><rect x="950" y="507" width="23" height="10" fill="#f00"/><path d="M950 507H973M950 517H973" stroke="#000" stroke-width="1.500"/>
<!-- big cyan -->
<path d="M982 522H1073V507H1233V558H1073V545H982Z" fill="#00ffff"/><path d="M1073 507H1233V558H1073" fill="none" stroke="#000" stroke-width="1.500"/><rect x="1030" y="530" width="15" height="15" fill="#4a6af0"/>
<g fill="#4a6af0" stroke="#3a6a50" stroke-width=".6"><rect x="970" y="529" width="8" height="16"/><rect x="981" y="529" width="8" height="16"/><rect x="992" y="529" width="8" height="16"/><rect x="1003" y="529" width="8" height="16"/><rect x="969" y="592" width="8" height="15"/><rect x="981" y="592" width="8" height="15"/><rect x="992" y="592" width="8" height="15"/><rect x="1003" y="592" width="8" height="15"/>
<rect x="971" y="549" width="38" height="39" stroke="#000" stroke-width="1.200"/>
<rect x="939" y="538" width="14" height="14"/><rect x="939" y="560" width="14" height="14"/><rect x="939" y="577" width="14" height="14"/><rect x="939" y="600" width="14" height="14"/>
<rect x="1034" y="552" width="13" height="14" stroke="#000"/><rect x="1029" y="572" width="23" height="15" stroke="#000"/><rect x="1059" y="577" width="13" height="14" stroke="#5a7a20"/><rect x="1059" y="599" width="13" height="14" stroke="#5a7a20"/><rect x="1028" y="607" width="24" height="16" stroke="#5a7a20"/></g>
<g fill="#3a4a70"><circle cx="976" cy="569" r="1.200"/><circle cx="991" cy="569" r="1.200"/><circle cx="1004" cy="569" r="1.200"/><circle cx="976" cy="582" r="1.200"/><circle cx="991" cy="582" r="1.200"/><circle cx="1004" cy="582" r="1.200"/></g>
<!-- caps -->
<rect x="843" y="522" width="24" height="28" fill="#00ffff"/>
<g fill="#4a6af0" stroke="#5a7a40" stroke-width=".6"><rect x="788" y="521" width="11" height="32"/><rect x="802" y="521" width="12" height="32"/><rect x="816" y="521" width="12" height="32"/><rect x="831" y="521" width="12" height="32"/><rect x="845" y="521" width="12" height="32"/></g>
<circle cx="768" cy="537" r="16.500" fill="#4a6af0" stroke="#3f8a18"/><circle cx="768" cy="537" r="10" fill="#b49cc4"/>
<circle cx="878" cy="537" r="16.500" fill="#4a6af0" stroke="#3f8a18"/><circle cx="878" cy="537" r="10" fill="#b49cc4"/>
<!-- big pads -->
<g fill="#4a6af0" stroke="#5a7a40" stroke-width="1"><rect x="724" y="573" width="43" height="45"/><rect x="782" y="573" width="37" height="45"/><rect x="826" y="573" width="37" height="45"/><rect x="878" y="573" width="43" height="45"/></g>
<ellipse cx="745.500" cy="595.500" rx="7.500" ry="15" fill="#b49cc4"/><ellipse cx="899.500" cy="595.500" rx="7.500" ry="15" fill="#b49cc4"/>
<!-- through holes -->
<use href="#ts" x="1153.500" y="257.500"/><use href="#th" x="1210" y="258"/>
<circle cx="1154" cy="313" r="17" fill="#4a6af0" stroke="#c08040"/><circle cx="1154" cy="313" r="11" fill="#b49cc4"/>
<use href="#ts" x="1210" y="313.500"/>
<use href="#th" x="1354" y="251"/><use href="#th" x="1410" y="251"/><use href="#th" x="1354" y="307"/><use href="#th" x="1410" y="307"/><use href="#th" x="1354" y="363"/><use href="#th" x="1410" y="363"/><use href="#th" x="1354" y="419"/><use href="#ts" x="1410" y="419"/>
<ellipse cx="1132" cy="429" rx="14" ry="17" fill="#4a6af0" stroke="#c08040"/><circle cx="1132" cy="429" r="9" fill="#b49cc4"/>
<ellipse cx="1159" cy="430" rx="14" ry="17" fill="#4a6af0" stroke="#c08040"/><circle cx="1159" cy="430" r="9" fill="#b49cc4"/>
<ellipse cx="1187" cy="430" rx="14" ry="17" fill="#4a6af0" stroke="#c08040"/><circle cx="1187" cy="430" r="9" fill="#b49cc4"/>
<circle cx="1125" cy="491" r="14" fill="#4a6af0" stroke="#3f8a18"/><circle cx="1125" cy="491" r="9" fill="#b49cc4"/>
<circle cx="1169" cy="491" r="14" fill="#4a6af0" stroke="#3f8a18"/><circle cx="1169" cy="491" r="9" fill="#b49cc4"/>
<!-- right pads -->
<g fill="#4a6af0" stroke="#000" stroke-width="1.200"><rect x="1273" y="504" width="26" height="23"/><rect x="1309" y="504" width="26" height="23"/><rect x="1273" y="594" width="26" height="23"/><rect x="1309" y="594" width="26" height="23"/></g>
<!-- vias -->
<use href="#v" x="872" y="280"/><use href="#v" x="850" y="296"/><use href="#v" x="870" y="297"/><use href="#v" x="948" y="295"/><use href="#v" x="962" y="295"/><use href="#v" x="998" y="295"/><use href="#v" x="1013" y="295"/><use href="#v" x="1024" y="280"/>
<use href="#v" x="883" y="318"/><use href="#v" x="933" y="318"/><use href="#v" x="948" y="318"/><use href="#v" x="984" y="318"/><use href="#v" x="998" y="337"/><use href="#v" x="890" y="338"/><use href="#v" x="836" y="332"/><use href="#v" x="827" y="339"/><use href="#v" x="816" y="344"/><use href="#v" x="808" y="353"/><use href="#v" x="870" y="360"/><use href="#v" x="890" y="369"/><use href="#v" x="973" y="377"/><use href="#v" x="991" y="376"/><use href="#v" x="1006" y="376"/>
<use href="#v" x="745" y="383"/><use href="#v" x="728" y="394"/><use href="#v" x="716" y="394"/><use href="#v" x="730" y="443"/><use href="#v" x="871" y="421"/><use href="#v" x="870" y="454"/><use href="#v" x="914" y="439"/><use href="#v" x="914" y="457"/><use href="#v" x="914" y="474"/><use href="#v" x="921" y="465"/>
<use href="#tv" x="1070" y="435"/><use href="#tv" x="1088" y="462"/><use href="#tv" x="1089" y="490"/><use href="#tv" x="1111" y="250"/>
<use href="#v" x="1322" y="395"/><use href="#v" x="1322" y="489"/>
<use href="#tv" x="762" y="395"/><use href="#tv" x="784" y="395"/><use href="#tv" x="795" y="480"/><use href="#tv" x="806" y="480"/><use href="#tv" x="828" y="480"/>
<use href="#v" x="748" y="508"/><use href="#v" x="794" y="516"/><use href="#tv" x="811" y="507"/><use href="#tv" x="794" y="557"/>
<use href="#tv" x="1066" y="510"/><use href="#tv" x="1035" y="500"/>
<use href="#tv" x="932" y="565"/><use href="#tv" x="936" y="607"/><use href="#v" x="1019" y="562"/><use href="#v" x="1019" y="575"/><use href="#tv" x="1054" y="561"/><use href="#tv" x="1025" y="615"/>
<use href="#tv" x="1107" y="584"/><use href="#tv" x="1120" y="584"/><use href="#tv" x="1134" y="585"/><use href="#tv" x="1166" y="584"/><use href="#tv" x="1180" y="584"/><use href="#tv" x="1193" y="585"/>
</g>

<!-- right buttons -->
<g>
<g transform="translate(1449.500 245.700)"><rect width="34" height="32" fill="#9cdcdc"/><path d="M0 0H34L31 3H3V29L0 32Z" fill="#d4f6f2"/><path d="M34 0V32H0L3 29H31V3Z" fill="#4f8f8a"/><g transform="translate(17 16)" fill="none" stroke="#000" stroke-width="1.800"><rect x="-10" y="-6" width="14" height="15"/><rect x="-7" y="-3" width="8" height="9"/><rect x="3" y="-10" width="7" height="7" stroke-width="1"/><path d="M-5 1.500H-1M-5 1.500L-3 0M-5 1.500L-3 3" stroke-width="1"/></g></g>
<g transform="translate(1449.500 280.700)"><rect width="34" height="32" fill="#9cdcdc"/><path d="M0 0H34L31 3H3V29L0 32Z" fill="#d4f6f2"/><path d="M34 0V32H0L3 29H31V3Z" fill="#4f8f8a"/><g transform="translate(17 16)"><rect x="-9" y="-3" width="18" height="13" fill="none" stroke="#000" stroke-width="1.800"/><rect x="-6" y="0" width="12" height="7" fill="none" stroke="#000" stroke-width="1.800"/><path d="M0-10L-5-5H-3V2H3V-5H5Z"/></g></g>
<g transform="translate(1449.500 315.700)"><rect width="34" height="32" fill="#9cdcdc"/><path d="M0 0H34L31 3H3V29L0 32Z" fill="#d4f6f2"/><path d="M34 0V32H0L3 29H31V3Z" fill="#4f8f8a"/><g transform="translate(17 16) rotate(180)"><rect x="-9" y="-3" width="18" height="13" fill="none" stroke="#000" stroke-width="1.800"/><rect x="-6" y="0" width="12" height="7" fill="none" stroke="#000" stroke-width="1.800"/><path d="M0-10L-5-5H-3V2H3V-5H5Z"/></g></g>
<g transform="translate(1449.500 350.700)"><rect width="34" height="32" fill="#9cdcdc"/><path d="M0 0H34L31 3H3V29L0 32Z" fill="#d4f6f2"/><path d="M34 0V32H0L3 29H31V3Z" fill="#4f8f8a"/><g transform="translate(17 16) rotate(-90)"><rect x="-9" y="-3" width="18" height="13" fill="none" stroke="#000" stroke-width="1.800"/><rect x="-6" y="0" width="12" height="7" fill="none" stroke="#000" stroke-width="1.800"/><path d="M0-10L-5-5H-3V2H3V-5H5Z"/></g></g>
<g transform="translate(1449.500 385.700)"><rect width="34" height="32" fill="#9cdcdc"/><path d="M0 0H34L31 3H3V29L0 32Z" fill="#d4f6f2"/><path d="M34 0V32H0L3 29H31V3Z" fill="#4f8f8a"/><g transform="translate(17 16) rotate(90)"><rect x="-9" y="-3" width="18" height="13" fill="none" stroke="#000" stroke-width="1.800"/><rect x="-6" y="0" width="12" height="7" fill="none" stroke="#000" stroke-width="1.800"/><path d="M0-10L-5-5H-3V2H3V-5H5Z"/></g></g>
<g transform="translate(1449.500 420.700)"><rect width="34" height="32" fill="#9cdcdc"/><path d="M0 0H34L31 3H3V29L0 32Z" fill="#d4f6f2"/><path d="M34 0V32H0L3 29H31V3Z" fill="#4f8f8a"/><g transform="translate(17 16)"><rect x="-10" y="-10" width="20" height="20" fill="none" stroke="#000" stroke-width="1.300"/><rect x="-3" y="-3" width="6" height="6" fill="none" stroke="#000" stroke-width="2"/><path d="M-6-10H6L2-6L4-5H-4L-2-6ZM-6 10H6L2 6L4 5H-4L-2 6ZM-10-6V6L-6 2L-5 4V-4L-6-2ZM10-6V6L6 2L5 4V-4L6-2Z"/></g></g>
<g transform="translate(1449.500 455.700)"><rect width="34" height="32" fill="#9cdcdc"/><path d="M0 0H34L31 3H3V29L0 32Z" fill="#d4f6f2"/><path d="M34 0V32H0L3 29H31V3Z" fill="#4f8f8a"/><g transform="translate(17 16)"><rect x="-10" y="-10" width="20" height="20" fill="none" stroke="#000" stroke-width="1.300"/><rect x="-3" y="-3" width="6" height="6" fill="none" stroke="#000" stroke-width="1.500"/><path d="M0-9L-4-5H4ZM0 9L-4 5H4ZM-9 0L-5-4V4ZM9 0L5-4V4Z"/></g></g>
</g>
<!-- popview Close button -->
<rect x="695" y="850" width="790" height="29" fill="#1a1a1a"/>
<rect x="697" y="853" width="785" height="23" fill="#9cdcdc"/><path d="M697 853H1482V855H699V876H697Z" fill="#c8f0ec"/><path d="M1482 853V876H697V874H1480V855H1482Z" fill="#4f8f8a"/>
<text x="1090" y="869.500" text-anchor="middle" font-family="Liberation Mono" font-weight="bold" font-size="14" fill="#101a1a">Close</text>
</svg>

<!-- top menu -->
<div class="a" style="left:0;top:0;width:1503px;height:25px;background:#9cdcdc;border-bottom:2px solid #5a8a8a"></div>
<div class="a" style="left:0;top:0;width:4px;height:27px;background:#5a8a8a"></div>
<div class="a" style="left:1503px;top:0;width:4px;height:28px;background:#5a8a8a"></div>
<div class="a" style="left:1507px;top:0;width:119px;height:24px;background:#a8e0e0;border-bottom:3px solid #c8f0ec;overflow:hidden">
<span class="a" style="left:26px;top:-21px;font:italic bold 34px/34px 'Liberation Sans',sans-serif;color:#0a1a80;white-space:pre">Fr</span>
<span class="a" style="left:80px;top:-21px;font:italic bold 34px/34px 'Liberation Sans',sans-serif;color:#0a1a80;white-space:pre">ntli</span>
<svg width="119" height="24" style="left:0;top:0"><path d="M5 2L25 0V2ZM7 5H25V7ZM4 8H25V10Z" fill="#f00" stroke="#f00"/><circle cx="67" cy="3" r="7.500" fill="none" stroke="#0a1a80" stroke-width="2"/><path d="M67 0L70 3L67 6L64 3Z" fill="#f00"/></svg>
</div>
<span class="m" style="left:15px"><u>F</u>ile</span>
<span class="m" style="left:56px"><u>E</u>dit</span>
<span class="m" style="left:98px"><u>A</u>ctions</span>
<span class="m" style="left:161px">O<u>p</u>tions</span>
<span class="m" style="left:226px">A<u>n</u>alysis</span>
<span class="m" style="left:296px">DFM</span>
<span class="m" style="left:346px"><u>S</u>tep</span>
<span class="m" style="left:391px"><u>R</u>out</span>
<span class="m" style="left:437px"><u>W</u>indows</span>
<span class="m" style="left:1459px">Help</span>

<!-- left panel -->
<div class="a" style="left:0;top:28px;width:154px;height:74px;background:#2f6f5f"></div>
<div class="a" style="left:3px;top:30px;width:149px;height:68px;background:#52ccac"></div>
<div class="h" style="left:83px;top:32px;padding-left:3px;width:65px;height:16px">fpkrfa0</div>
<div class="h" style="left:3px;top:50px;width:148px;height:17px"></div>
<span class="a" style="left:82px;top:52px;font:13px/14px 'Liberation Mono',monospace;color:#101a1a">n</span>
<div class="a" style="left:3px;top:72px;width:148px;height:24px;background:#000"></div>
<div class="a" style="left:5px;top:74px;width:65px;height:18px;background:#9cdcdc;border-top:1px solid #d4f6f2;border-left:1px solid #d4f6f2;border-bottom:2px solid #4f8f8a;border-right:2px solid #4f8f8a;font:bold 14.5px/18px 'Liberation Mono',monospace;color:#101a1a;white-space:pre;padding-left:77px">ix ...</div>

<div class="a" style="left:0;top:102px;width:152px;height:796px;background:#52ccac"></div>
<div class="a" style="left:152px;top:102px;width:2px;height:796px;background:#a8e8d8"></div>
<div class="a" style="left:0;top:102px;width:5px;height:733px;background:#2f6f5f"></div>
<div class="a" style="left:126px;top:102px;width:2px;height:733px;background:#a8e8d8"></div>
<div class="a" style="left:4px;top:102px;width:122px;height:733px;background:#52ccac;border-right:1.500px solid #123a30;border-bottom:1.500px solid #123a30;box-sizing:border-box"></div>
<div class="a" style="left:0;top:835px;width:3px;height:63px;background:#a8e8d8"></div>
<div class="a" style="left:0;top:898px;width:154px;height:2px;background:#a8e8d8"></div>
<div class="a" style="left:2px;top:900px;width:150px;height:6px;background:#fcc34e;border-left:1px solid #000;border-right:1px solid #000;border-top:1px solid #000;box-sizing:border-box"></div>

<div class="g" style="top:105px;height:35px"><div class="a" style="left:34px;top:2px;width:81px;height:15px;background:#fff"></div><div class="a" style="left:34px;top:19px;width:81px;height:14px;background:#009e78"></div></div>
<div class="g" style="top:144px;height:17px"><div class="r"><i></i><b>cs.etch</b></div></div>
<div class="g o" style="top:165px;height:80px">
<div class="r"><span class="a" style="left:1px;top:0;width:16px;height:16px;background:#0018e0"></span><i></i><span class="c" style="background:#f00;left:18px;top:0"></span><b>cs<span class="a" style="left:74px;top:5px;width:3px;height:3px;border:1px solid #101a1a"></span></b></div>
<div class="r"><i></i><b>sig2t</b></div><div class="r"><i></i><b>sig3b</b></div><div class="r"><i></i><b>sig4t</b></div><div class="r"><i></i><b>sig5b</b></div></div>
<div class="g" style="top:250px;height:17px"><div class="r"><i></i><b>ss.etch</b></div></div>
<div class="g" style="top:271px;height:49px"><div class="r o"><i></i><b>ss</b></div><div class="r"><i></i><b style="background:#009e78">bs</b></div><div class="r"><i></i><b style="background:#fff">bo</b></div></div>
<div class="g gr" style="top:323px;height:66px">
<div class="r"><i></i><span class="c" style="background:#ffff30"></span><b>drl</b></div><div class="r"><i></i><span class="c" style="background:#0a30f0"></span><b>szdrl</b></div><div class="r"><i></i><b>ldi</b></div><div class="r"><i></i><b style="background:#dcdcdc">rout</b></div></div>
<div class="g" style="top:392.500px;height:434px">
<div class="r"><i></i><b>tp</b></div><div class="r"><i></i><b>bp</b></div><div class="r"><i></i><b>npth</b></div><div class="r"><i></i><b>ydkdrl</b></div><div class="r"><i></i><b>dwk</b></div><div class="r"><i></i><b>szdwk</b></div><div class="r"><i></i><b>jb_cu</b></div><div class="r"><i></i><b>mill</b></div><div class="r"><i></i><b>d</b></div><div class="r"><i></i><b>tof</b></div><div class="r"><i></i><b>tsf</b></div><div class="r"><i></i><b>csf</b></div><div class="r"><i></i><b>sig2tf</b></div><div class="r"><i></i><b>sig3bf</b></div><div class="r"><i></i><b>sig4tf</b></div><div class="r"><i></i><b>sig5bf</b></div><div class="r"><i></i><b>ssf</b></div><div class="r"><i></i><b>bsf</b></div><div class="r"><i></i><b>bof</b></div><div class="r"><i></i><b>drlf</b></div><div class="r"><i></i><b>npthdrlf</b></div><div class="r"><i></i><b>pthslotf</b></div><div class="r"><i></i><b>routf</b></div><div class="r"><i></i><b>millf</b></div><div class="r"><i></i><b>tpf</b></div><div class="r"><i></i><b>bpf</b></div><div class="r"><i></i><b>pthslotf+++</b></div>
</div>

<!-- dropdown -->
<div class="a" style="left:7px;top:22px;width:76px;height:117px;background:#52ccac;border-top:2px solid #a8e8d8;border-left:2px solid #a8e8d8;border-right:2px solid #2f8f70;border-bottom:2px solid #2f8f70;box-sizing:border-box"></div>
<span class="dm" style="top:26px"><u>S</u>ave</span>
<span class="dm" style="top:49px">Scri<u>p</u>t</span>
<span class="dm" style="top:72px"><u>L</u>ocks</span>
<span class="dm" style="top:95px">P<u>r</u>int ...</span>
<span class="dm" style="top:118px"><u>C</u>lose</span>
<span class="tri" style="top:52px"></span>
<span class="tri" style="top:75px"></span>
</div></body></html>
